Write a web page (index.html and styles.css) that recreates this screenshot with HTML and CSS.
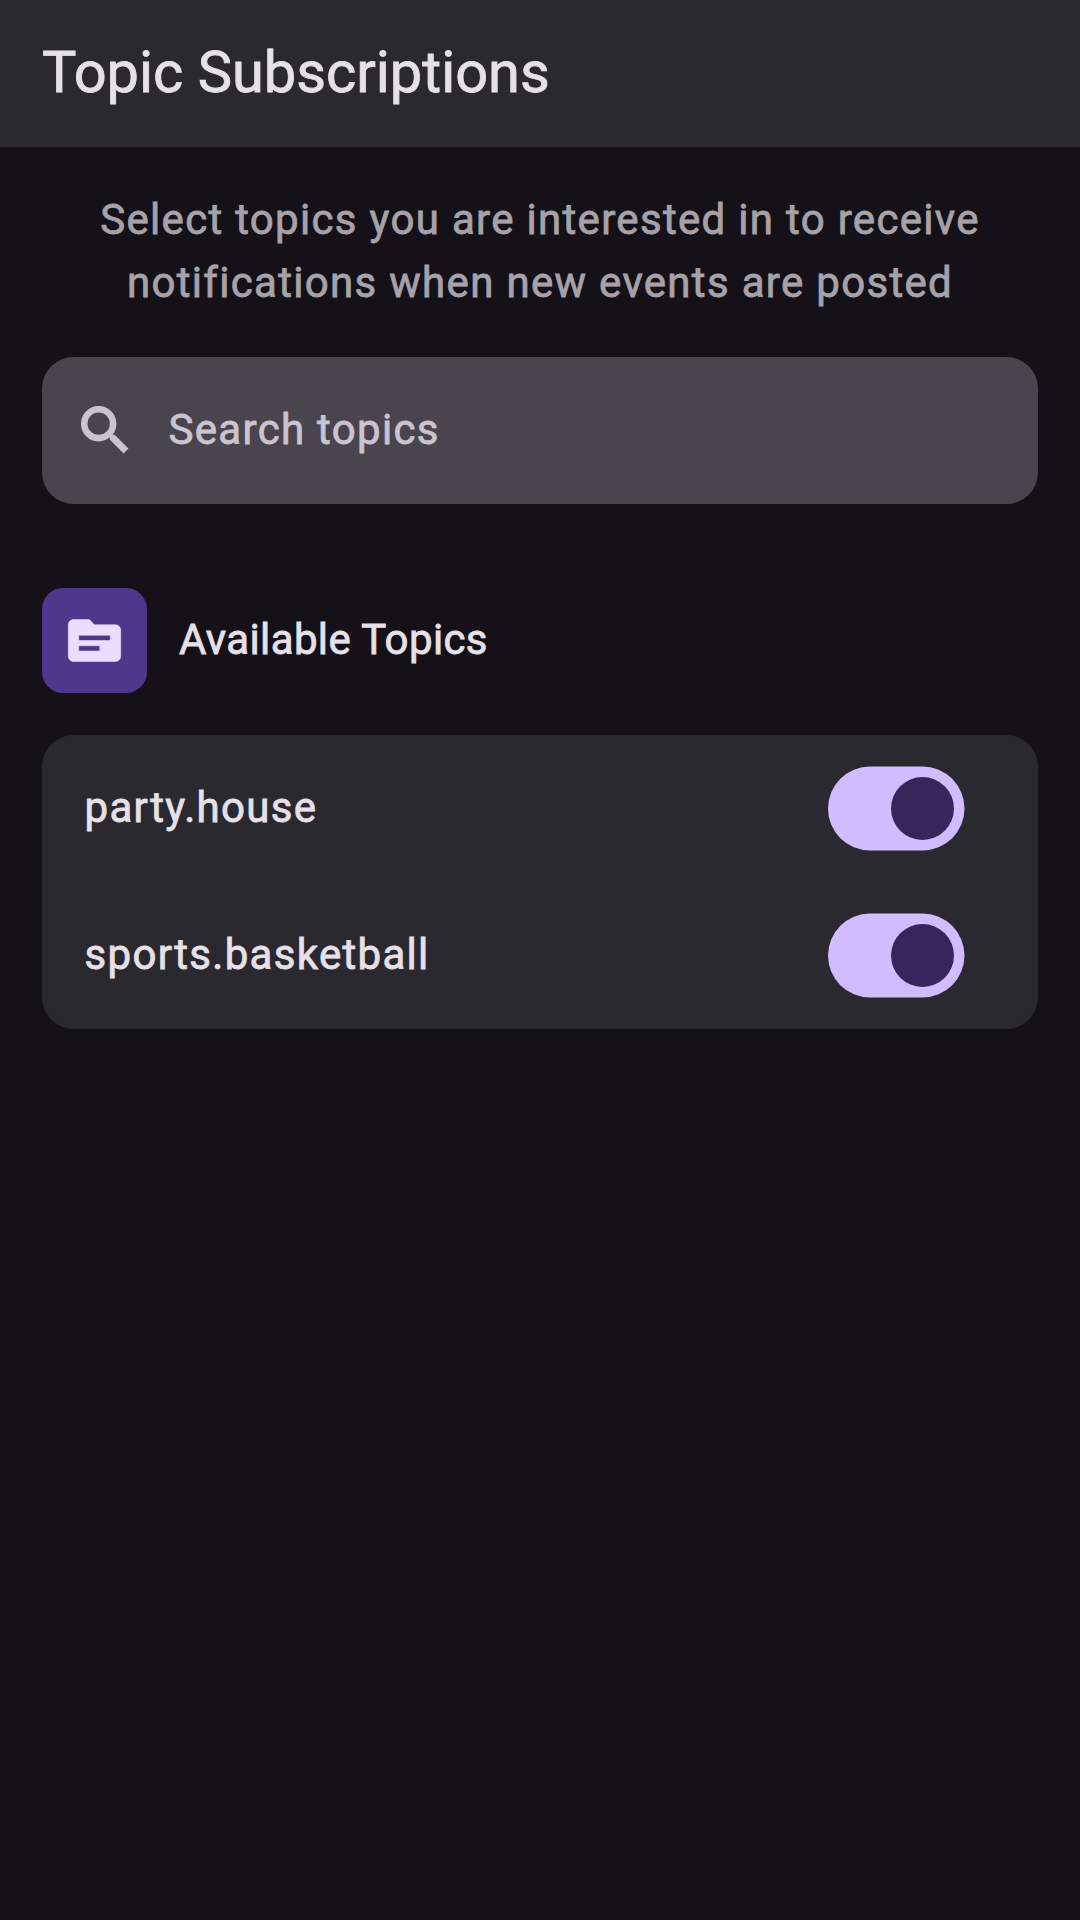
FILE: index.html
```html
<!DOCTYPE html>
<html lang="en">
<head>
<meta charset="utf-8">
<title>Topic Subscriptions</title>
<link rel="stylesheet" href="styles.css">
</head>
<body>
<header class="app-bar"><h1 class="app-title">Topic Subscriptions</h1></header>
<main class="content">
  <p class="intro">Select topics you are interested in to receive<br>notifications when new events are posted</p>
  <div class="search">
    <svg class="icon icon-search" viewBox="0.1 0.1 24 24" aria-hidden="true"><path d="M15.5 14h-.79l-.28-.27A6.471 6.471 0 0 0 16 9.5 6.5 6.5 0 1 0 9.5 16c1.61 0 3.09-.59 4.23-1.57l.27.28v.79l5 4.99L20.49 19l-4.99-5zm-6 0C7.01 14 5 11.99 5 9.5S7.01 5 9.5 5 14 7.01 14 9.5 11.99 14 9.5 14z"/></svg>
    <span class="search-label">Search topics</span>
  </div>
  <div class="section-head">
    <span class="tile"><svg class="icon icon-topic" viewBox="0 0 24 24" aria-hidden="true"><path d="M20 6h-8l-2-2H4c-1.1 0-1.99.9-1.99 2L2 18c0 1.1.9 2 2 2h16c1.1 0 2-.9 2-2V8c0-1.1-.9-2-2-2zm-6 10H6v-2h8v2zm4-4H6v-2h12v2z"/></svg></span>
    <h2 class="section-title">Available Topics</h2>
  </div>
  <ul class="topics">
    <li class="topic">
      <span class="topic-name">party.house</span>
      <svg class="switch" viewBox="0 0 137 85" role="switch" aria-checked="true" aria-label="party.house"><rect class="track" y="0.5" width="136.5" height="84" rx="42"/><circle class="thumb" cx="94.5" cy="42.5" r="31.5"/></svg>
    </li>
    <li class="topic">
      <span class="topic-name">sports.basketball</span>
      <svg class="switch" viewBox="0 0 137 85" role="switch" aria-checked="true" aria-label="sports.basketball"><rect class="track" y="0.5" width="136.5" height="84" rx="42"/><circle class="thumb" cx="94.5" cy="42.5" r="31.5"/></svg>
    </li>
  </ul>
</main>
</body>
</html>
```
FILE: styles.css
```css
* { box-sizing: border-box; }

body {
  margin: 0;
  min-height: 1920px;
  background: #141218;
  color: #e6e0e9;
  font: 400 42px/63px Roboto, sans-serif;
  letter-spacing: 1.3125px;
  -webkit-text-stroke: 0.8px currentColor;
}

.app-bar {
  display: flex;
  align-items: center;
  height: 147px;
  padding: 0 42px 2px;
  background: #2b2930;
}

.app-title {
  margin: 0;
  font-size: 57.75px;
  font-weight: 400;
  line-height: 73px;
  letter-spacing: 0;
}

.content { padding: 41px 42px 42px; }

.intro {
  margin: 0 0 43px;
  text-align: center;
  color: #a7a2aa;
}

.search {
  display: flex;
  align-items: center;
  gap: 32px;
  height: 147px;
  padding: 0 31.5px;
  border-radius: 31.5px;
  background: #49454f;
  color: #cac4d0;
}

.icon {
  flex: none;
  width: 63px;
  height: 63px;
  fill: currentColor;
  stroke: currentColor;
}

.icon-search { stroke-width: 0.5; }

.icon-topic { stroke-width: 0.2; }

.search-label { padding-bottom: 2px; }

.section-head {
  display: flex;
  align-items: center;
  gap: 32px;
  margin: 84px 0 42px;
}

.tile {
  display: flex;
  padding: 21px;
  border-radius: 21px;
  background: #4f378b;
  color: #eaddff;
}

.section-title {
  margin: 0;
  padding-bottom: 2px;
  font-size: 42px;
  font-weight: 400;
  letter-spacing: 0.39375px;
}

.topics {
  margin: 0;
  padding: 0;
  list-style: none;
  border-radius: 31.5px;
  background: #2b2930;
}

.topic {
  display: flex;
  align-items: center;
  justify-content: space-between;
  height: 147px;
  padding: 0 73px 0 42.5px;
}

.topic-name { padding-bottom: 2px; }

.switch {
  flex: none;
  width: 137px;
  height: 85px;
}

.track { fill: #d0bcff; }

.thumb { fill: #38255b; }
```
